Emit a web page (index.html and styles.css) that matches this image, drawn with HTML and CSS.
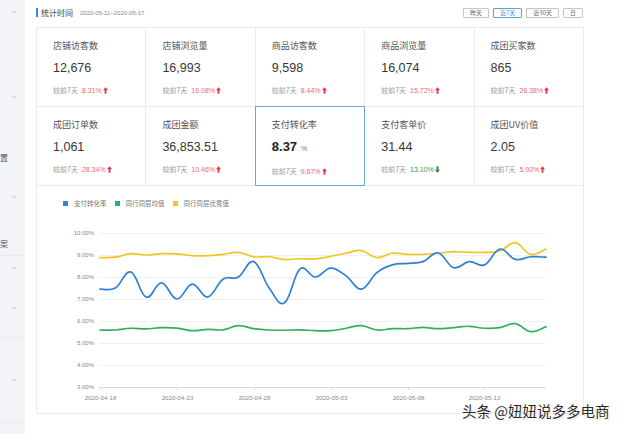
FILE: index.html
```html
<!DOCTYPE html>
<html lang="zh-CN">
<head>
<meta charset="utf-8">
<title>统计</title>
<link rel="stylesheet" href="styles.css">
</head>
<body>
<div class="page">
  <aside class="sidebar">
    <div class="sb-row chev-row"><svg class="chev" viewBox="0 0 6 4"><polyline points="0.5,0.5 3,3 5.5,0.5"/></svg></div>
    <div class="sb-row chev-row m61"><svg class="chev" viewBox="0 0 6 4"><polyline points="0.5,0.5 3,3 5.5,0.5"/></svg></div>
    <div class="sb-row text-row m36">置</div>
    <div class="sb-row chev-row m16"><svg class="chev" viewBox="0 0 6 4"><polyline points="0.5,0.5 3,3 5.5,0.5"/></svg></div>
    <div class="sb-row text-row m22 lined">案</div>
    <div class="sb-row chev-row"><svg class="chev" viewBox="0 0 6 4"><polyline points="0.5,0.5 3,3 5.5,0.5"/></svg></div>
    <div class="sb-row chev-row m16"><svg class="chev" viewBox="0 0 6 4"><polyline points="0.5,0.5 3,3 5.5,0.5"/></svg></div>
    <div class="sb-line m17"></div>
    <div class="sb-row chev-row m30"><svg class="chev" viewBox="0 0 6 4"><polyline points="0.5,0.5 3,3 5.5,0.5"/></svg></div>
    <div class="sb-line m30"></div>
  </aside>

  <main class="main">
    <div class="head">
      <div class="title"><span class="bar"></span>统计时间<span class="range">2020-05-11~2020-05-17</span></div>
      <div class="btns">
        <span class="btn">昨天</span>
        <span class="btn on">近7天</span>
        <span class="btn">近30天</span>
        <span class="btn">日</span>
      </div>
    </div>

    <div class="cards">
      <div class="card">
        <div class="c-title">店铺访客数</div>
        <div class="c-value">12,676</div>
        <div class="c-cmp">较前7天<span class="up">8.31%</span><svg class="arr up-arr" viewBox="0 0 6 8"><path d="M3 0L6 3.6H4.1V8H1.9V3.6H0Z"/></svg></div>
      </div>
      <div class="card">
        <div class="c-title">店铺浏览量</div>
        <div class="c-value">16,993</div>
        <div class="c-cmp">较前7天<span class="up">16.08%</span><svg class="arr up-arr" viewBox="0 0 6 8"><path d="M3 0L6 3.6H4.1V8H1.9V3.6H0Z"/></svg></div>
      </div>
      <div class="card">
        <div class="c-title">商品访客数</div>
        <div class="c-value">9,598</div>
        <div class="c-cmp">较前7天<span class="up">8.44%</span><svg class="arr up-arr" viewBox="0 0 6 8"><path d="M3 0L6 3.6H4.1V8H1.9V3.6H0Z"/></svg></div>
      </div>
      <div class="card">
        <div class="c-title">商品浏览量</div>
        <div class="c-value">16,074</div>
        <div class="c-cmp">较前7天<span class="up">15.72%</span><svg class="arr up-arr" viewBox="0 0 6 8"><path d="M3 0L6 3.6H4.1V8H1.9V3.6H0Z"/></svg></div>
      </div>
      <div class="card">
        <div class="c-title">成团买家数</div>
        <div class="c-value">865</div>
        <div class="c-cmp">较前7天<span class="up">26.38%</span><svg class="arr up-arr" viewBox="0 0 6 8"><path d="M3 0L6 3.6H4.1V8H1.9V3.6H0Z"/></svg></div>
      </div>
      <div class="card">
        <div class="c-title">成团订单数</div>
        <div class="c-value">1,061</div>
        <div class="c-cmp">较前7天<span class="up">28.34%</span><svg class="arr up-arr" viewBox="0 0 6 8"><path d="M3 0L6 3.6H4.1V8H1.9V3.6H0Z"/></svg></div>
      </div>
      <div class="card">
        <div class="c-title">成团金额</div>
        <div class="c-value">36,853.51</div>
        <div class="c-cmp">较前7天<span class="up">10.46%</span><svg class="arr up-arr" viewBox="0 0 6 8"><path d="M3 0L6 3.6H4.1V8H1.9V3.6H0Z"/></svg></div>
      </div>
      <div class="card selected">
        <div class="c-title">支付转化率</div>
        <div class="c-value strong">8.37<span class="unit">%</span></div>
        <div class="c-cmp">较前7天<span class="up">9.67%</span><svg class="arr up-arr" viewBox="0 0 6 8"><path d="M3 0L6 3.6H4.1V8H1.9V3.6H0Z"/></svg></div>
      </div>
      <div class="card">
        <div class="c-title">支付客单价</div>
        <div class="c-value">31.44</div>
        <div class="c-cmp">较前7天<span class="down">13.10%</span><svg class="arr down-arr" viewBox="0 0 6 8"><path d="M3 8L6 4.4H4.1V0H1.9V4.4H0Z"/></svg></div>
      </div>
      <div class="card">
        <div class="c-title">成团UV价值</div>
        <div class="c-value">2.05</div>
        <div class="c-cmp">较前7天<span class="up">5.90%</span><svg class="arr up-arr" viewBox="0 0 6 8"><path d="M3 0L6 3.6H4.1V8H1.9V3.6H0Z"/></svg></div>
      </div>
    </div>

    <div class="chart">
      <div class="legend">
        <span class="lg"><i class="sq blue"></i>支付转化率</span>
        <span class="lg"><i class="sq green"></i>同行同层均值</span>
        <span class="lg"><i class="sq yellow"></i>同行同层优秀值</span>
      </div>
      <svg id="chart" class="plot" width="546" height="204" viewBox="0 0 546 204"></svg>
    </div>
  </main>

  <div class="watermark">头条 @妞妞说多多电商</div>
</div>
<script src="script.js"></script>
</body>
</html>
```

FILE: styles.css
```css
* { box-sizing: border-box; margin: 0; padding: 0; }
html, body { width: 640px; height: 434px; overflow: hidden; background: #fff; }
body {
  font-family: "Liberation Sans", "Noto Sans CJK SC", sans-serif;
  color: #333;
}
.page { display: flex; height: 434px; position: relative; }

/* sidebar */
.sidebar {
  width: 25px; flex: none; background: #f3f4f7;
  display: flex; flex-direction: column; overflow: hidden;
}
.sb-row { height: 24px; display: flex; align-items: center; flex: none; }
.chev-row { justify-content: flex-end; padding-right: 8px; }
.text-row { font-family: "Noto Sans CJK SC", sans-serif; font-size: 8px; color: #555; padding-left: 0; }
.lined { border-bottom: 1px solid #e8eaee; height: 25px; }
.sb-line { height: 1px; background: #e8eaee; flex: none; }
.chev { width: 6px; height: 4px; }
.chev polyline { fill: none; stroke: #c3c7cf; stroke-width: 0.9; }
.m16 { margin-top: 16px; }
.m17 { margin-top: 17px; }
.m22 { margin-top: 22px; }
.m30 { margin-top: 30px; }
.m36 { margin-top: 36px; }
.m61 { margin-top: 61px; }

/* main */
.main { width: 548px; margin-left: 11px; flex: none; }
.head { height: 27px; display: flex; align-items: center; justify-content: space-between; padding-bottom: 2px; }
.title {
  display: flex; align-items: center;
  font-family: "Noto Sans CJK SC", sans-serif; font-size: 8px; color: #444;
}
.title .bar { width: 2px; height: 9px; background: #2d8cf0; margin-right: 3px; }
.range { font-family: "Liberation Sans", sans-serif; font-size: 6px; color: #8a8a8a; margin-left: 7px; }
.btns { display: flex; gap: 4px; margin-right: 1px; }
.btn {
  height: 10px; line-height: 8px; padding: 0 6px;
  border: 1px solid #c6c6c6; border-radius: 1px;
  font-family: "Noto Sans CJK SC", sans-serif; font-size: 6px; color: #666;
}
.btn.on { border-color: #5aa2d2; color: #3b8fd0; }

/* cards */
.cards {
  display: grid; grid-template-columns: repeat(5, 1fr);
  border-top: 1px solid #e9ebef; border-left: 1px solid #e9ebef;
}
.card {
  height: 79px; padding: 12px 0 0 16px;
  border-right: 1px solid #e9ebef; border-bottom: 1px solid #e9ebef;
  position: relative;
}
.card.selected::after {
  content: ""; position: absolute;
  top: -1px; left: -1px; right: -1px; bottom: -1px;
  border: 1px solid #6aa8d0;
}
.c-title {
  font-family: "Noto Sans CJK SC", sans-serif;
  font-size: 9px; line-height: 12px; color: #555;
}
.c-value {
  margin-top: 8px; font-size: 12.5px; line-height: 16px; color: #383838;
}
.c-value.strong { font-weight: bold; font-size: 13px; color: #222; }
.c-value .unit { font-weight: normal; font-size: 7px; color: #777; margin-left: 4px; }
.c-cmp {
  margin-top: 9px; height: 10px; display: flex; align-items: center;
  font-family: "Noto Sans CJK SC", sans-serif; font-size: 7px; color: #9a9a9a;
}
.c-cmp .up, .c-cmp .down { font-family: "Liberation Sans", sans-serif; margin-left: 4px; }
.c-cmp .up { color: #ec6a72; }
.c-cmp .down { color: #2f9a45; }
.arr { width: 5px; height: 7px; margin-left: 1px; }
.up-arr path { fill: #e0363e; }
.down-arr path { fill: #1c8a35; }

/* chart */
.chart {
  height: 228px;
  border-left: 1px solid #e9ebef; border-right: 1px solid #e9ebef; border-bottom: 1px solid #e9ebef;
}
.legend {
  height: 24px; display: flex; align-items: center; gap: 8px;
  padding-left: 26px; padding-top: 14px; padding-bottom: 4px;
  font-family: "Noto Sans CJK SC", sans-serif; font-size: 6.5px; color: #777;
}
.lg { display: flex; align-items: center; }
.sq { display: block; width: 5px; height: 5px; margin-right: 6px; }
.sq.blue { background: #2f80d8; }
.sq.green { background: #2fb05b; }
.sq.yellow { background: #f2c51f; }
.plot { display: block; }
.plot .grid { stroke: #f0f1f3; stroke-width: 1; }
.plot .axis { stroke: #d9dbe0; stroke-width: 1; }
.plot .tick { stroke: #d9dbe0; stroke-width: 1; }
.plot .ylab { font-family: "Liberation Sans", sans-serif; font-size: 6px; fill: #888; text-anchor: end; }
.plot .xlab { font-family: "Liberation Sans", sans-serif; font-size: 6.2px; fill: #888; text-anchor: middle; }
.plot .ln { fill: none; stroke-width: 1.7; stroke-linejoin: round; stroke-linecap: round; }
.plot .ln.blue { stroke: #2f80d8; }
.plot .ln.green { stroke: #2fb05b; }
.plot .ln.yellow { stroke: #f2c51f; }

/* watermark overlay */
.watermark {
  position: absolute; left: 462px; top: 403px;
  font-family: "Noto Sans CJK SC", sans-serif; font-size: 14.5px; line-height: 15px;
  color: #2a2a2a; white-space: nowrap;
  text-shadow: 1px 0 0 #fff, -1px 0 0 #fff, 0 1px 0 #fff, 0 -1px 0 #fff, 1px 1px 1px rgba(0,0,0,0.25);
}
```

FILE: script.js
```js
(function () {
  var svg = document.getElementById('chart');
  var X0 = 63, X1 = 509, N = 30, DX = (X1 - X0) / (N - 1);
  var Y0 = 23, STEP = 22;
  function yv(v) { return Y0 + (10 - v) * STEP; }
  function xi(i) { return X0 + i * DX; }

  var blue = [7.45,7.5,8.23,7.09,7.73,7.0,7.68,7.09,7.9,8.0,8.7,7.5,6.83,8.36,8.0,8.4,8.05,7.45,8.2,8.55,8.62,8.7,9.09,8.42,8.7,8.55,9.27,8.8,8.92,8.9];
  var yellow = [8.88,8.9,9.06,9.0,9.06,9.05,8.97,8.97,9.03,9.12,8.92,8.92,8.79,8.83,8.82,8.94,9.08,9.2,8.88,9.08,9.03,9.03,9.08,9.15,9.12,9.12,9.18,9.56,9.03,9.27];
  var green = [5.59,5.59,5.67,5.64,5.7,5.68,5.56,5.62,5.6,5.79,5.65,5.59,5.58,5.6,5.56,5.56,5.67,5.79,5.59,5.65,5.65,5.71,5.65,5.7,5.76,5.67,5.7,5.88,5.52,5.74];

  var s = '';
  for (var k = 0; k < 8; k++) {
    var y = Y0 + k * STEP + 0.5;
    s += '<line class="' + (k === 7 ? 'axis' : 'grid') + '" x1="' + (X0 - 1) + '" x2="' + X1 + '" y1="' + y + '" y2="' + y + '"/>';
    s += '<text class="ylab" x="57" y="' + (y + 1.8) + '">' + (10 - k).toFixed(2) + '%</text>';
  }
  var dates = ['2020-04-18', '2020-04-23', '2020-04-28', '2020-05-03', '2020-05-08', '2020-05-13'];
  for (var j = 0; j < dates.length; j++) {
    var x = Math.round(xi(j * 5)) + 0.5;
    s += '<line class="tick" x1="' + x + '" x2="' + x + '" y1="' + (Y0 + 7 * STEP) + '" y2="' + (Y0 + 7 * STEP + 3) + '"/>';
    s += '<text class="xlab" x="' + x + '" y="190">' + dates[j] + '</text>';
  }

  function path(data) {
    var p = data.map(function (v, i) { return [xi(i), yv(v)]; });
    var d = 'M' + p[0][0].toFixed(2) + ' ' + p[0][1].toFixed(2);
    for (var i = 0; i < p.length - 1; i++) {
      var p0 = p[i - 1] || p[i], p1 = p[i], p2 = p[i + 1], p3 = p[i + 2] || p[i + 1];
      var t = 0.2;
      var c1x = p1[0] + (p2[0] - p0[0]) * t, c1y = p1[1] + (p2[1] - p0[1]) * t;
      var c2x = p2[0] - (p3[0] - p1[0]) * t, c2y = p2[1] - (p3[1] - p1[1]) * t;
      d += 'C' + c1x.toFixed(2) + ' ' + c1y.toFixed(2) + ' ' + c2x.toFixed(2) + ' ' + c2y.toFixed(2) + ' ' + p2[0].toFixed(2) + ' ' + p2[1].toFixed(2);
    }
    return d;
  }
  s += '<path class="ln green" d="' + path(green) + '"/>';
  s += '<path class="ln yellow" d="' + path(yellow) + '"/>';
  s += '<path class="ln blue" d="' + path(blue) + '"/>';
  svg.innerHTML = s;
})();
```
